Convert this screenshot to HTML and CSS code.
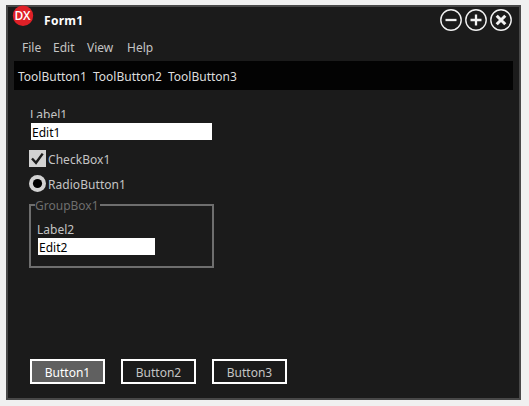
FILE: index.html
```html
<!DOCTYPE html>
<html lang="en">
<head>
<meta charset="utf-8">
<title>Form1</title>
<link rel="stylesheet" href="styles.css">
</head>
<body>
<div class="window">
  <header class="titlebar">
    <svg class="logo" width="22" height="22" viewBox="0 0 22 22">
      <circle cx="11" cy="10.8" r="10.2" fill="#df2027"/>
      <text x="10.5" y="15" text-anchor="middle" textLength="16" class="logo-text">DX</text>
    </svg>
    <h1 class="title">Form1</h1>
    <div class="controls">
      <svg width="22" height="22" viewBox="0 0 22 22"><circle cx="11" cy="11" r="10.2"/><path d="M5.5 11h11"/></svg>
      <svg width="22" height="22" viewBox="0 0 22 22"><circle cx="11" cy="11" r="10.2"/><path d="M5.5 11h11M11 5.5v11"/></svg>
      <svg width="22" height="22" viewBox="0 0 22 22"><circle cx="11" cy="11" r="10.2"/><path class="thick" d="M6.7 6.7l8.6 8.6M15.3 6.7l-8.6 8.6"/></svg>
    </div>
  </header>
  <nav class="menu"><span class="file">File</span><span class="edit-menu">Edit</span><span class="view">View</span><span>Help</span></nav>
  <div class="toolbar"><span>ToolButton1</span><span>ToolButton2</span><span>ToolButton3</span></div>
  <main class="form">
    <div class="label label-clipped">Label1</div>
    <div class="field field-wide">Edit1</div>
    <div class="option option-check">
      <svg width="17" height="17" viewBox="0 0 17 17"><rect width="17" height="17" fill="#d2d2d2"/><path d="M3 8.5l4 4.3L13.7 3.6" fill="none" stroke="#1b1b1b" stroke-width="2.4"/></svg>
      <span>CheckBox1</span>
    </div>
    <div class="option option-radio">
      <svg width="17" height="17" viewBox="0 0 17 17"><circle cx="8.5" cy="8.5" r="8.5" fill="#d2d2d2"/><circle cx="8.5" cy="8.5" r="4.6" fill="#000"/></svg>
      <span>RadioButton1</span>
    </div>
    <section class="group">
      <div class="legend">GroupBox1</div>
      <div class="label">Label2</div>
      <div class="field field-narrow">Edit2</div>
    </section>
  </main>
  <footer class="buttons">
    <div class="button focused">Button1</div>
    <div class="button">Button2</div>
    <div class="button">Button3</div>
  </footer>
</div>
</body>
</html>
```
FILE: styles.css
```css
* { box-sizing: border-box; }
body {
  margin: 0;
  padding: 5px 8px 6px 6px;
  height: 406px;
  background: #f0f0f0;
  font: 12px/17px "Noto Sans", sans-serif;
  letter-spacing: 0;
  color: #c4c4c4;
  overflow: hidden;
}
svg { display: block; }
.window {
  width: 515px;
  height: 395px;
  border: 2px solid #484848;
  background: #1b1b1b;
  display: flex;
  flex-direction: column;
}
.titlebar { height: 32px; display: flex; }
.logo { margin: -2px 0 0 4px; }
.logo-text { font: 600 12px "Open Sans", sans-serif; fill: #fff; }
.title {
  margin: 5px 0 0 10px;
  font-size: 12px;
  line-height: 17px;
  font-weight: 700;
  letter-spacing: 0.3px;
  color: #fff;
}
.controls { display: flex; gap: 3px; margin: 2px 7px 0 auto; }
.controls svg { fill: none; stroke: #f2f2f2; stroke-width: 1.4; }
.controls path { stroke-width: 2.3; }
.controls .thick { stroke-width: 3; }
.menu { height: 22px; display: flex; padding-left: 14px; color: #c4c4c4; }
.file { width: 31px; }
.edit-menu { width: 34px; }
.view { width: 40px; }
.toolbar {
  height: 29px;
  margin: 0 6px;
  padding: 7px 0 0 4px;
  background: #030303;
  color: #dedede;
  display: flex;
}
.toolbar span { width: 75px; }
.form { padding: 16px 0 0 21px; }
.label { height: 17px; }
.label-clipped { height: 12px; margin-left: 1px; overflow: hidden; }
.field {
  height: 17px;
  padding-left: 1px;
  line-height: 19px;
  background: #fff;
  color: #000;
}
.field-wide { width: 181px; margin: 5px 0 0 2px; }
.field-narrow { width: 117px; margin-left: 1px; }
.option { height: 17px; display: flex; gap: 2px; }
.option-check { margin-top: 10px; }
.option-radio { margin-top: 8px; }
.option span { line-height: 19px; letter-spacing: 0.05px; }
.group {
  width: 185px;
  height: 64px;
  margin-top: 12px;
  padding-left: 6px;
  border: 2px solid #6e6e6e;
}
.legend {
  width: 65px;
  height: 17px;
  margin: -9px 0 7px -2px;
  background: #1b1b1b;
  color: #6e6e6e;
}
.buttons { display: flex; gap: 16px; margin: auto 0 14px 22px; }
.button {
  width: 75px;
  height: 25px;
  border: 2px solid #fff;
  text-align: center;
  line-height: 23px;
}
.focused { background: #606060; color: #fff; }
```
